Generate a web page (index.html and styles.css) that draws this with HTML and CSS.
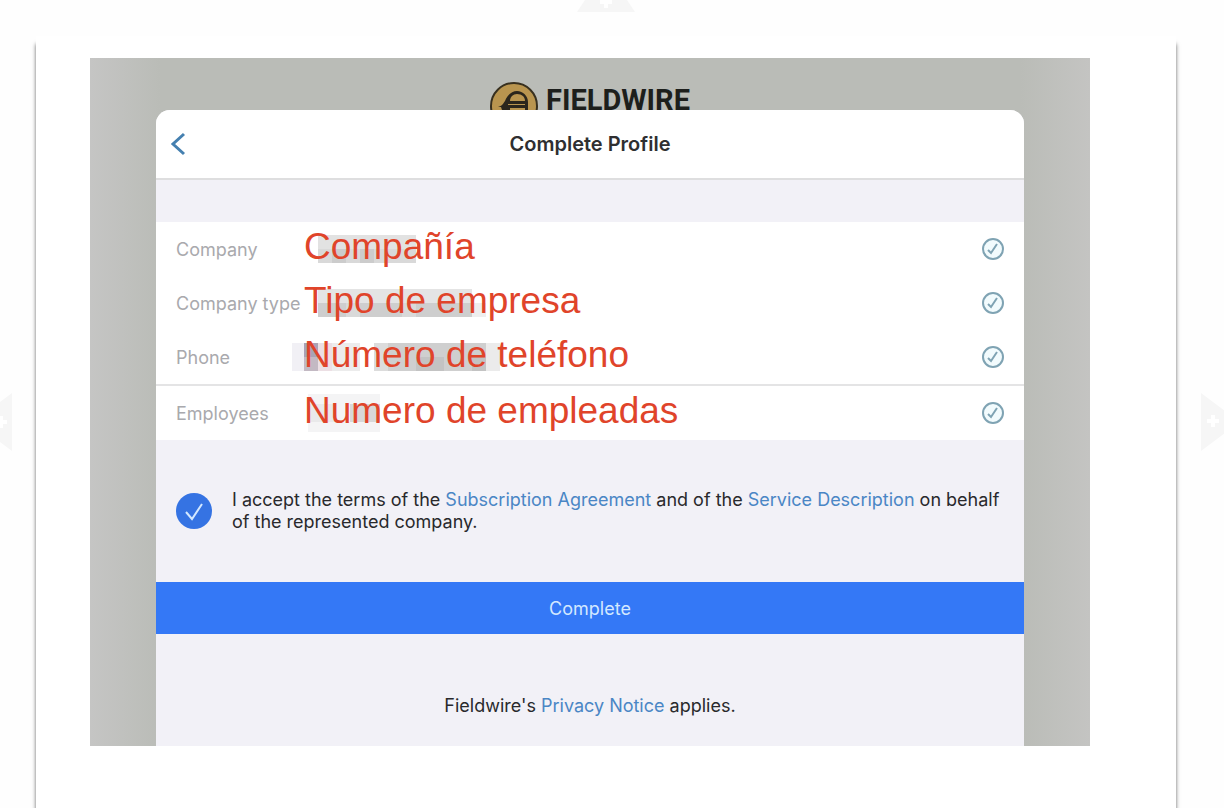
FILE: index.html
```html
<!DOCTYPE html>
<html lang="es">
<head>
    <meta charset="UTF-8">
    <meta name="viewport" content="width=device-width, initial-scale=1.0">
    <title>Complete Profile</title>
    <link rel="stylesheet" href="styles.css">
</head>
<body>
    <button class="add add-top" type="button" aria-label="Add above">
        <svg width="58" height="58" viewBox="0 0 58 58"><path class="add-shape" d="M0 58L24 22h10l24 36z"/><path class="add-plus" d="M27 42h4v4h4v4h-4v4h-4v-4h-4v-4h4z"/></svg>
    </button>
    <button class="add add-left" type="button" aria-label="Add before">
        <svg width="58" height="58" viewBox="0 0 58 58"><path class="add-shape" d="M58 0v58L34 40V18z"/><path class="add-plus" d="M45 23h4v4h4v4h-4v4h-4v-4h-4v-4h4z"/></svg>
    </button>
    <button class="add add-right" type="button" aria-label="Add after">
        <svg width="58" height="58" viewBox="0 0 58 58"><path class="add-shape" d="M0 0l24 18v22L0 58z"/><path class="add-plus" d="M10 22h4v4h4v4h-4v4h-4v-4H6v-4h4z"/></svg>
    </button>

    <main class="page">
        <div class="shot">
            <div class="brand">
                <svg class="brand-logo" width="48" height="28" viewBox="0 0 48 28">
                    <circle cx="24" cy="24" r="23" fill="#b9954f" stroke="#38301f" stroke-width="2"/>
                    <path d="M8 25c4-1 5-3 7-6 2-6 7-10 12-10 6 0 11 5 11 11v8H12l-1-3z" fill="#2b261c"/>
                    <path d="M20 19c0-4 3-7 7-7 5 0 8 3 8 7z" fill="#b9954f"/>
                    <path d="M18 22h17v1H18zM20 26h15v2H20z" fill="#b9954f"/>
                </svg>
                <span class="brand-name">FIELDWIRE</span>
            </div>

            <form class="modal">
                <header class="modal-header">
                    <button class="back" type="button" aria-label="Back">
                        <svg width="16" height="26" viewBox="0 0 16 26"><path d="M14 3L3 13l11 10" fill="none" stroke="#4580b0" stroke-width="3"/></svg>
                    </button>
                    <h1>Complete Profile</h1>
                </header>

                <div class="fields">
                    <div class="row">
                        <label for="company">Company</label>
                        <svg class="mask" width="200" height="28" viewBox="0 0 200 28">
                            <path d="M14 0h98v28H14z" fill="#e2e2e2"/>
                            <path d="M14 14h98v14H14z" fill="#d9d9d9"/>
                            <path d="M28 14h14v14H28zM56 14h14v14H56z" fill="#cccccc"/>
                        </svg>
                        <input type="text" id="company" name="company" value="Compañía">
                        <svg class="valid" width="22" height="22" viewBox="0 0 22 22"><circle cx="11" cy="11" r="10"/><path d="M6 12l3 3 6-9"/></svg>
                    </div>
                    <div class="row">
                        <label for="type">Company type</label>
                        <svg class="mask" width="200" height="28" viewBox="0 0 200 28">
                            <path d="M14 0h154v28H14z" fill="#e4e4e4"/>
                            <path d="M14 14h154v14H14z" fill="#cecece"/>
                            <path d="M42 14h14v14H42zM98 14h14v14H98z" fill="#d9d9d9"/>
                            <path d="M168 14h14v14h-14z" fill="#eeeeee"/>
                        </svg>
                        <input type="text" id="type" name="type" value="Tipo de empresa">
                        <svg class="valid" width="22" height="22" viewBox="0 0 22 22"><circle cx="11" cy="11" r="10"/><path d="M6 12l3 3 6-9"/></svg>
                    </div>
                    <div class="row">
                        <label for="phone">Phone</label>
                        <svg class="mask mask-phone" width="208" height="28" viewBox="0 0 208 28">
                            <path d="M0 0h12v28H0z" fill="#f1f0f5"/>
                            <path d="M12 0h14v28H12z" fill="#aaa3b5"/>
                            <path d="M12 14h14v14H12z" fill="#c3b9c3"/>
                            <path d="M26 0h14v28H26z" fill="#ecdfe4"/>
                            <path d="M40 0h28v28H40z" fill="#ececec"/>
                            <path d="M82 0h42v28H82z" fill="#dcdcdc"/>
                            <path d="M96 0h98v28H96z" fill="#cfcfcf"/>
                            <path d="M124 14h28v14h-28zM180 14h14v14h-14z" fill="#c3c3c3"/>
                            <path d="M194 0h14v28h-14z" fill="#ebebeb"/>
                        </svg>
                        <input type="tel" id="phone" name="phone" value="Número de teléfono">
                        <svg class="valid" width="22" height="22" viewBox="0 0 22 22"><circle cx="11" cy="11" r="10"/><path d="M6 12l3 3 6-9"/></svg>
                    </div>
                    <div class="row row-last">
                        <label for="employees">Employees</label>
                        <svg class="mask" width="200" height="38" viewBox="0 0 200 38">
                            <path d="M4 0h72v38H4z" fill="#f4f4f5"/>
                            <path d="M4 10h28v18H4z" fill="#e9e9ea"/>
                            <path d="M46 10h30v18H46z" fill="#d8d8d8"/>
                        </svg>
                        <input type="text" id="employees" name="employees" value="Numero de empleadas">
                        <svg class="valid" width="22" height="22" viewBox="0 0 22 22"><circle cx="11" cy="11" r="10"/><path d="M6 12l3 3 6-9"/></svg>
                    </div>
                </div>

                <div class="terms">
                    <div class="tick">
                        <input type="checkbox" id="accept" name="accept" checked>
                        <svg width="36" height="36" viewBox="0 0 36 36"><path d="M10 19l6 7 10-15" fill="none" stroke="#d3e8ff" stroke-width="2"/></svg>
                    </div>
                    <label for="accept">I accept the terms of the <a href="#">Subscription Agreement</a> and of the <a href="#">Service Description</a> on behalf of the represented company.</label>
                </div>

                <button class="complete" type="submit">Complete</button>

                <p class="notice">Fieldwire's <a href="#">Privacy Notice</a> applies.</p>
            </form>
        </div>
    </main>
</body>
</html>
```

FILE: styles.css
```css
/* Reset */
* {
    margin: 0;
    padding: 0;
    box-sizing: border-box;
}

body {
    position: relative;
    display: flex;
    min-height: 100vh;
    overflow-x: hidden;
    font-family: Inter, "Liberation Sans", sans-serif;
    background-color: #fefefe;
}

a {
    color: #4a86c5;
    text-decoration: none;
}

button {
    border: none;
    background: none;
    font-family: inherit;
    cursor: pointer;
}

svg {
    display: block;
}

/* Add handles on the edges of the window */
.add {
    position: absolute;
    width: 58px;
    height: 58px;
}

.add-shape {
    fill: #f6f6f6;
}

.add-plus {
    fill: #ffffff;
}

.add-top {
    top: -46px;
    left: 577px;
}

.add-left {
    top: 393px;
    left: -46px;
}

.add-right {
    top: 393px;
    right: -35px;
}

/* Sheet */
.page {
    flex: 1;
    margin: 36px 48px 0 36px;
    padding: 22px 86px 62px 54px;
    background-color: #ffffff;
    box-shadow: 0 8px 4px rgba(0, 0, 0, 0.6);
}

.shot {
    padding: 0 66px;
    background: linear-gradient(to right, #c5c5c4, #babcb7 7%, #babcb7 93%, #c4c4c2);
}

.brand {
    display: flex;
    justify-content: center;
    gap: 8px;
    height: 52px;
    padding-top: 24px;
}

.brand-logo {
    flex: none;
}

.brand-name {
    font-family: Roboto, sans-serif;
    font-size: 29px;
    font-weight: 700;
    line-height: 36px;
    color: #1d1f1c;
}

/* Profile form */
.modal {
    overflow: hidden;
    border-radius: 14px 14px 0 0;
    background-color: #f2f1f7;
}

.modal-header {
    display: grid;
    grid-template-columns: 32px 1fr 32px;
    align-items: center;
    height: 70px;
    padding: 0 14px;
    background-color: #ffffff;
    border-bottom: 2px solid #dededf;
}

.back {
    width: 20px;
    height: 26px;
}

h1 {
    font-size: 20px;
    font-weight: 600;
    text-align: center;
    color: #2f2f31;
}

.fields {
    margin-top: 42px;
    background-color: #ffffff;
}

.row {
    position: relative;
    display: flex;
    align-items: center;
    height: 54px;
    padding: 0 20px;
}

.row-last {
    height: 56px;
    border-top: 2px solid #e4e4e5;
}

.row label {
    flex: none;
    width: 128px;
    font-size: 18px;
    white-space: nowrap;
    color: #a9a9ad;
}

.row input {
    position: relative;
    flex: 1;
    min-width: 0;
    height: 44px;
    margin-bottom: 4px;
    border: none;
    outline: none;
    background: none;
    font-family: "Liberation Sans", Arial, sans-serif;
    font-size: 37px;
    color: #e0442a;
}

.mask {
    position: absolute;
    left: 148px;
}

.mask-phone {
    left: 136px;
}

.valid {
    flex: none;
    fill: #f2fbfd;
    stroke: #7fa3b3;
    stroke-width: 2;
}

.valid path {
    fill: none;
}

.terms {
    display: flex;
    align-items: center;
    gap: 20px;
    height: 142px;
    padding: 0 20px;
}

.tick {
    position: relative;
    flex: none;
    width: 36px;
    height: 36px;
}

.tick input {
    display: block;
    width: 36px;
    height: 36px;
    appearance: none;
    border-radius: 50%;
    background-color: #d0d0d6;
}

.tick input:checked {
    background-color: #3573e3;
}

.tick svg {
    position: absolute;
    top: 0;
    left: 0;
    pointer-events: none;
}

.terms label,
.notice {
    font-size: 18px;
    line-height: 22px;
    color: #29292c;
}

.complete {
    display: block;
    width: 100%;
    height: 52px;
    font-size: 18px;
    color: #d3e8ff;
    background-color: #3478f6;
}

.notice {
    padding: 61px 20px 29px;
    text-align: center;
}
```
